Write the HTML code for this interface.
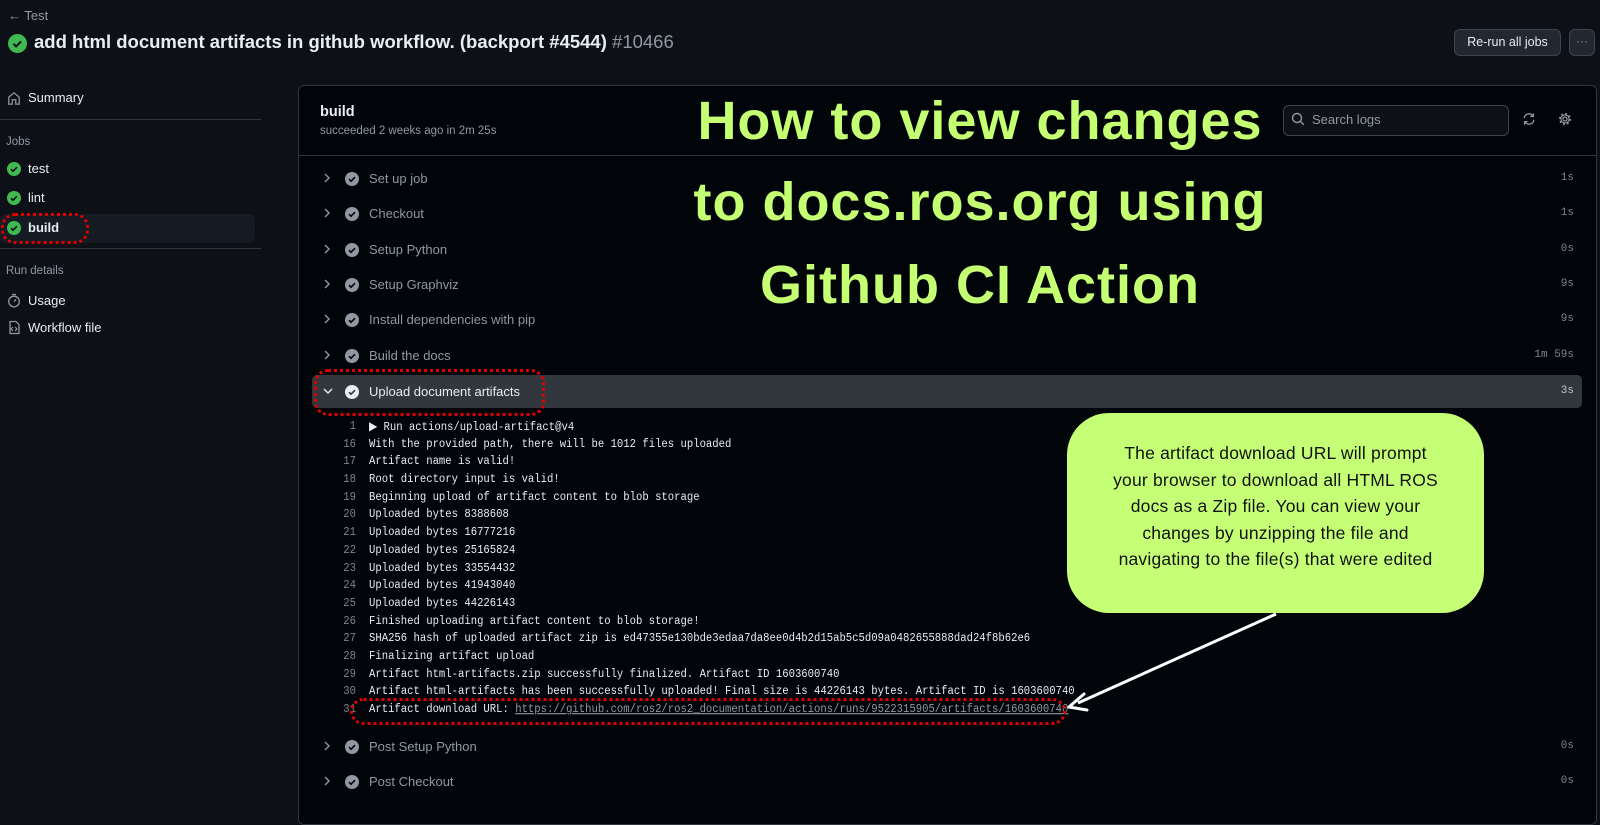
<!DOCTYPE html>
<html><head><meta charset="utf-8"><style>
*{margin:0;padding:0;box-sizing:border-box}
body{width:1600px;height:805px;overflow:hidden;background:#0d1117;font-family:"Liberation Sans","DejaVu Sans",sans-serif;color:#e6edf3;position:relative}
.a{position:absolute;white-space:nowrap}
.muted{color:#9198a1}
.gc{position:absolute;width:15px;height:15px;border-radius:50%;background:#3fb950}
.sc{position:absolute;width:14px;height:14px;border-radius:50%;background:#9198a1}
.gc svg,.sc svg{position:absolute;left:0;top:0}
.step{position:absolute;left:312px;width:1270px;height:33px;font-size:13px;color:#9198a1;white-space:nowrap}
.step .t{position:absolute;left:57px;top:9px}
.step .ch{position:absolute;left:10px;top:10px}
.step .sc{left:33px;top:10px}
.step .d{position:absolute;right:8px;top:10px;font-family:"Liberation Mono",monospace;font-size:11px;color:#7d8590}
.log{position:absolute;left:312px;width:1200px;height:16px;font-family:"Liberation Mono",monospace;font-size:10.6px;color:#e6edf3;white-space:nowrap;transform:scaleY(1.12);transform-origin:0 50%}
.log .n{position:absolute;width:44px;text-align:right;left:0;color:#7d8590}
.log .x{position:absolute;left:57px;white-space:nowrap}
.red{position:absolute;border:3px dotted #e00000;border-radius:14px}
.h{color:#c5ff72;font-weight:bold;font-size:54px;text-align:center;position:absolute;left:640px;width:680px;letter-spacing:1px;white-space:nowrap}
</style></head><body>
<div class="a muted" style="left:8px;top:8px;font-size:13px">&#8592; Test</div>
<div class="gc" style="left:8px;top:34px;width:19px;height:19px"><svg width="19" height="19"><path d="M5.5 9.8l2.6 2.6 5-5" stroke="#0d1117" stroke-width="2" fill="none"/></svg></div>
<div class="a" style="left:34px;top:31px;font-size:18.5px;font-weight:bold">add html document artifacts in github workflow. (backport #4544) <span class="muted" style="font-weight:normal">#10466</span></div>
<div class="a" style="left:1454px;top:29px;width:107px;height:27px;border:1px solid #3d444d;background:#212830;border-radius:6px;font-size:12.5px;text-align:center;line-height:25px">Re-run all jobs</div>
<div class="a" style="left:1569px;top:29px;width:26px;height:27px;border:1px solid #3d444d;background:#212830;border-radius:6px;font-size:12px;text-align:center;line-height:22px;color:#9198a1">···</div>

<svg class="a" style="left:7px;top:91px" width="14" height="14" viewBox="0 0 16 16"><path d="M2 7l6-5 6 5v8h-4v-5H6v5H2z" fill="none" stroke="#9198a1" stroke-width="1.4"/></svg>
<div class="a" style="left:28px;top:90px;font-size:13px">Summary</div>
<div class="a" style="left:0;top:119px;width:261px;height:1px;background:#30363d"></div>
<div class="a muted" style="left:6px;top:136px;font-size:11.5px">Jobs</div>
<div class="a" style="left:0;top:214px;width:255px;height:29px;background:#151b23;border-radius:6px"></div>
<div class="gc" style="left:7px;top:162px;width:14px;height:14px"><svg width="14" height="14"><path d="M4 7.2l2 2 4-4" stroke="#0d1117" stroke-width="1.6" fill="none"/></svg></div>
<div class="a" style="left:28px;top:161px;font-size:13px">test</div>
<div class="gc" style="left:7px;top:191px;width:14px;height:14px"><svg width="14" height="14"><path d="M4 7.2l2 2 4-4" stroke="#0d1117" stroke-width="1.6" fill="none"/></svg></div>
<div class="a" style="left:28px;top:190px;font-size:13px">lint</div>
<div class="gc" style="left:7px;top:221px;width:14px;height:14px"><svg width="14" height="14"><path d="M4 7.2l2 2 4-4" stroke="#0d1117" stroke-width="1.6" fill="none"/></svg></div>
<div class="a" style="left:28px;top:220px;font-size:13px;font-weight:bold">build</div>
<div class="a" style="left:0;top:248px;width:261px;height:1px;background:#30363d"></div>
<div class="a muted" style="left:6px;top:265px;font-size:11.5px">Run details</div>
<svg class="a" style="left:7px;top:293px" width="14" height="15" viewBox="0 0 14 15"><circle cx="7" cy="8.5" r="5.3" fill="none" stroke="#9198a1" stroke-width="1.3"/><path d="M5 1.5h4M7 8.5l2-2" stroke="#9198a1" stroke-width="1.3"/></svg>
<div class="a" style="left:28px;top:293px;font-size:13px">Usage</div>
<svg class="a" style="left:7px;top:320px" width="14" height="15" viewBox="0 0 14 15"><path d="M3 1.5h6l3 3v9H3z" fill="none" stroke="#9198a1" stroke-width="1.3"/><path d="M6 7l-2 2 2 2M8 7l2 2-2 2" fill="none" stroke="#9198a1" stroke-width="1.1"/></svg>
<div class="a" style="left:28px;top:320px;font-size:13px">Workflow file</div>

<div class="a" style="left:298px;top:85px;width:1299px;height:740px;background:#010409;border:1px solid #30363d;border-radius:6px"></div>
<div class="a" style="left:320px;top:104px;font-size:14.5px;font-weight:bold">build</div>
<div class="a muted" style="left:320px;top:125px;font-size:11.5px">succeeded 2 weeks ago in 2m 25s</div>
<div class="a" style="left:299px;top:155px;width:1297px;height:1px;background:#30363d"></div>
<div class="a" style="left:1283px;top:105px;width:226px;height:31px;border:1px solid #3d444d;border-radius:6px;background:#0d1117"></div>
<svg class="a" style="left:1291px;top:112px" width="14" height="14" viewBox="0 0 14 14"><circle cx="6" cy="6" r="4.5" fill="none" stroke="#9198a1" stroke-width="1.4"/><path d="M9.3 9.3l3.5 3.5" stroke="#9198a1" stroke-width="1.4"/></svg>
<div class="a muted" style="left:1312px;top:112px;font-size:13px">Search logs</div>
<svg class="a" style="left:1522px;top:112px" width="14" height="14" viewBox="0 0 16 16"><path d="M2.5 7A5.5 5.5 0 0 1 12.5 4.5M13.5 9A5.5 5.5 0 0 1 3.5 11.5" fill="none" stroke="#9198a1" stroke-width="1.5"/><path d="M13 1.5v3.5h-3.5M3 14.5V11h3.5" fill="none" stroke="#9198a1" stroke-width="1.5"/></svg>
<svg class="a" style="left:1558px;top:112px" width="14" height="14" viewBox="0 0 16 16"><circle cx="8" cy="8" r="2.3" fill="none" stroke="#9198a1" stroke-width="1.4"/><circle cx="8" cy="8" r="5.5" fill="none" stroke="#9198a1" stroke-width="2.6" stroke-dasharray="2.2 2.1"/><circle cx="8" cy="8" r="4.6" fill="none" stroke="#9198a1" stroke-width="1.2"/></svg>

<div class="step" style="top:162px"><svg class="ch" width="10" height="12"><path d="M3 2l4 4-4 4" stroke="#9198a1" stroke-width="1.4" fill="none"/></svg><div class="sc"><svg width="14" height="14"><path d="M4 7.2l2 2 4-4" stroke="#010409" stroke-width="1.6" fill="none"/></svg></div><div class="t">Set up job</div><div class="d">1s</div></div>
<div class="step" style="top:197px"><svg class="ch" width="10" height="12"><path d="M3 2l4 4-4 4" stroke="#9198a1" stroke-width="1.4" fill="none"/></svg><div class="sc"><svg width="14" height="14"><path d="M4 7.2l2 2 4-4" stroke="#010409" stroke-width="1.6" fill="none"/></svg></div><div class="t">Checkout</div><div class="d">1s</div></div>
<div class="step" style="top:233px"><svg class="ch" width="10" height="12"><path d="M3 2l4 4-4 4" stroke="#9198a1" stroke-width="1.4" fill="none"/></svg><div class="sc"><svg width="14" height="14"><path d="M4 7.2l2 2 4-4" stroke="#010409" stroke-width="1.6" fill="none"/></svg></div><div class="t">Setup Python</div><div class="d">0s</div></div>
<div class="step" style="top:268px"><svg class="ch" width="10" height="12"><path d="M3 2l4 4-4 4" stroke="#9198a1" stroke-width="1.4" fill="none"/></svg><div class="sc"><svg width="14" height="14"><path d="M4 7.2l2 2 4-4" stroke="#010409" stroke-width="1.6" fill="none"/></svg></div><div class="t">Setup Graphviz</div><div class="d">9s</div></div>
<div class="step" style="top:303px"><svg class="ch" width="10" height="12"><path d="M3 2l4 4-4 4" stroke="#9198a1" stroke-width="1.4" fill="none"/></svg><div class="sc"><svg width="14" height="14"><path d="M4 7.2l2 2 4-4" stroke="#010409" stroke-width="1.6" fill="none"/></svg></div><div class="t">Install dependencies with pip</div><div class="d">9s</div></div>
<div class="step" style="top:339px"><svg class="ch" width="10" height="12"><path d="M3 2l4 4-4 4" stroke="#9198a1" stroke-width="1.4" fill="none"/></svg><div class="sc"><svg width="14" height="14"><path d="M4 7.2l2 2 4-4" stroke="#010409" stroke-width="1.6" fill="none"/></svg></div><div class="t">Build the docs</div><div class="d">1m 59s</div></div>
<div class="step" style="top:375px;background:#32363d;border-radius:5px;color:#e6edf3"><svg class="ch" width="12" height="12"><path d="M2 4l4 4 4-4" stroke="#e6edf3" stroke-width="1.4" fill="none"/></svg><div class="sc" style="background:#e6edf3"><svg width="14" height="14"><path d="M4 7.2l2 2 4-4" stroke="#32363d" stroke-width="1.6" fill="none"/></svg></div><div class="t">Upload document artifacts</div><div class="d" style="color:#c0c6cc">3s</div></div>

<div class="log" style="top:421px"><span class="n">1</span><span class="x">&#9654; Run actions/upload-artifact@v4</span></div>
<div class="log" style="top:439px"><span class="n">16</span><span class="x">With the provided path, there will be 1012 files uploaded</span></div>
<div class="log" style="top:456px"><span class="n">17</span><span class="x">Artifact name is valid!</span></div>
<div class="log" style="top:474px"><span class="n">18</span><span class="x">Root directory input is valid!</span></div>
<div class="log" style="top:492px"><span class="n">19</span><span class="x">Beginning upload of artifact content to blob storage</span></div>
<div class="log" style="top:509px"><span class="n">20</span><span class="x">Uploaded bytes 8388608</span></div>
<div class="log" style="top:527px"><span class="n">21</span><span class="x">Uploaded bytes 16777216</span></div>
<div class="log" style="top:545px"><span class="n">22</span><span class="x">Uploaded bytes 25165824</span></div>
<div class="log" style="top:563px"><span class="n">23</span><span class="x">Uploaded bytes 33554432</span></div>
<div class="log" style="top:580px"><span class="n">24</span><span class="x">Uploaded bytes 41943040</span></div>
<div class="log" style="top:598px"><span class="n">25</span><span class="x">Uploaded bytes 44226143</span></div>
<div class="log" style="top:616px"><span class="n">26</span><span class="x">Finished uploading artifact content to blob storage!</span></div>
<div class="log" style="top:633px"><span class="n">27</span><span class="x">SHA256 hash of uploaded artifact zip is ed47355e130bde3edaa7da8ee0d4b2d15ab5c5d09a0482655888dad24f8b62e6</span></div>
<div class="log" style="top:651px"><span class="n">28</span><span class="x">Finalizing artifact upload</span></div>
<div class="log" style="top:669px"><span class="n">29</span><span class="x">Artifact html-artifacts.zip successfully finalized. Artifact ID 1603600740</span></div>
<div class="log" style="top:686px"><span class="n">30</span><span class="x">Artifact html-artifacts has been successfully uploaded! Final size is 44226143 bytes. Artifact ID is 1603600740</span></div>
<div class="log" style="top:704px"><span class="n">31</span><span class="x">Artifact download URL: <span style="text-decoration:underline;color:#9198a1">https://github.com/ros2/ros2_documentation/actions/runs/9522315905/artifacts/1603600740</span></span></div>

<div class="step" style="top:730px"><svg class="ch" width="10" height="12"><path d="M3 2l4 4-4 4" stroke="#9198a1" stroke-width="1.4" fill="none"/></svg><div class="sc"><svg width="14" height="14"><path d="M4 7.2l2 2 4-4" stroke="#010409" stroke-width="1.6" fill="none"/></svg></div><div class="t">Post Setup Python</div><div class="d">0s</div></div>
<div class="step" style="top:765px"><svg class="ch" width="10" height="12"><path d="M3 2l4 4-4 4" stroke="#9198a1" stroke-width="1.4" fill="none"/></svg><div class="sc"><svg width="14" height="14"><path d="M4 7.2l2 2 4-4" stroke="#010409" stroke-width="1.6" fill="none"/></svg></div><div class="t">Post Checkout</div><div class="d">0s</div></div>

<div class="h" style="top:90px">How to view changes</div>
<div class="h" style="top:171px">to docs.ros.org using</div>
<div class="h" style="top:254px">Github CI Action</div>

<div class="a" style="left:1067px;top:413px;width:417px;height:200px;background:#c5ff75;border-radius:42px;color:#111;font-size:17.5px;text-align:center;line-height:26.5px;padding-top:27px;white-space:normal;letter-spacing:0.2px">The artifact download URL will prompt<br>your browser to download all HTML ROS<br>docs as a Zip file. You can view your<br>changes by unzipping the file and<br>navigating to the file(s) that were edited</div>
<svg class="a" style="left:0;top:0" width="1600" height="805"><path d="M1276 614L1078 703" stroke="#fff" stroke-width="3"/><path d="M1069 707L1084 694M1069 707L1087 710" stroke="#fff" stroke-width="3" stroke-linecap="round"/></svg>

<div class="red" style="left:1px;top:213px;width:88px;height:31px"></div>
<div class="red" style="left:314px;top:369px;width:231px;height:47px"></div>
<div class="red" style="left:350px;top:698px;width:716px;height:27px"></div>
</body></html>
